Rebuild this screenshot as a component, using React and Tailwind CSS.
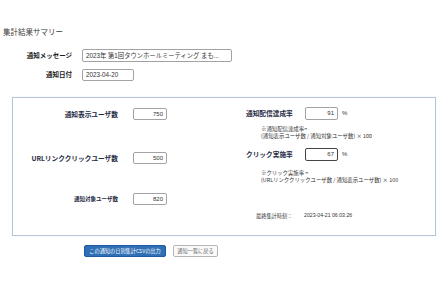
const jp = { fontFamily: '"Noto Sans CJK JP", "Noto Sans", sans-serif' };
const num = { fontFamily: '"Liberation Sans", "Noto Sans CJK JP", sans-serif' };

function NumBox({ value, w = "w-[34px]", h = "h-[12px]", dark = false }) {
  return (
    <div
      className={`${w} ${h} box-border rounded-[2px] border bg-white flex items-center justify-end pr-[3px] text-[6px] text-[#333] ${
        dark ? "border-[#444]" : "border-[#a3a3a3]"
      }`}
      style={num}
    >
      {value}
    </div>
  );
}

export default function App() {
  return (
    <div className="w-[440px] h-[284px] bg-white overflow-hidden" style={jp}>
      <div className="pt-[27px] pl-[3px] text-[7.5px] leading-[10px] text-[#3a3a3a]">
        集計結果サマリー
      </div>

      <div className="mt-[12px] flex flex-col gap-[7px]">
        <div className="flex items-center h-[13px]">
          <div className="w-[72px] text-right text-[6.5px] font-bold text-[#222]">
            通知メッセージ
          </div>
          <div
            className="ml-[10px] w-[150px] h-[13px] box-border border border-[#a3a3a3] rounded-[2px] flex items-center pl-[3px] text-[6.3px] text-[#333] whitespace-nowrap overflow-hidden"
            style={num}
          >
            2023年 第1回タウンホールミーティング まも...
          </div>
        </div>
        <div className="flex items-center h-[12px]">
          <div className="w-[72px] text-right text-[6.5px] font-bold text-[#222]">
            通知日付
          </div>
          <div
            className="ml-[10px] w-[52px] h-[12px] box-border border border-[#a3a3a3] rounded-[2px] flex items-center pl-[3px] text-[6.3px] text-[#333]"
            style={num}
          >
            2023-04-20
          </div>
        </div>
      </div>

      <div className="mt-[16px] ml-[12px] w-[424px] h-[139px] box-border border border-[#b4c5db] shadow-[0_0_1px_#d5dfeb] flex">
        {/* left column */}
        <div className="w-[154px] pt-[10px] flex flex-col">
          <div className="flex items-center h-[12px]">
            <div className="w-[105px] text-right text-[6.7px] font-bold text-[#1f2b45]">
              通知表示ユーザ数
            </div>
            <div className="ml-[15px]">
              <NumBox value="750" />
            </div>
          </div>
          <div className="flex items-center h-[12px] mt-[32px]">
            <div className="w-[105px] text-right text-[6.7px] font-bold text-[#1f2b45] whitespace-nowrap">
              URLリンククリックユーザ数
            </div>
            <div className="ml-[15px]">
              <NumBox value="500" />
            </div>
          </div>
          <div className="flex items-center h-[12px] mt-[29px]">
            <div className="w-[105px] text-right text-[5.5px] font-bold text-[#1f2b45]">
              通知対象ユーザ数
            </div>
            <div className="ml-[15px]">
              <NumBox value="820" />
            </div>
          </div>
        </div>

        {/* right column */}
        <div className="ml-[79px] pt-[9px] flex flex-col">
          <div className="flex items-center h-[13px]">
            <div className="w-[59px] text-[6.7px] font-bold text-[#1f2b45] whitespace-nowrap">
              通知配信達成率
            </div>
            <NumBox value="91" w="w-[33px]" h="h-[13px]" />
            <span className="ml-[4px] text-[6px] text-[#333]" style={num}>%</span>
          </div>
          <div className="mt-[6px] ml-[15px] text-[5.4px] leading-[7px] text-[#333] whitespace-nowrap">
            <div>※通知配信達成率=</div>
            <div>(通知表示ユーザ数 / 通知対象ユーザ数) × 100</div>
          </div>
          <div className="flex items-center h-[13px] mt-[8px]">
            <div className="w-[59px] text-[6.7px] font-bold text-[#1f2b45] whitespace-nowrap">
              クリック実施率
            </div>
            <NumBox value="67" w="w-[33px]" h="h-[13px]" dark />
            <span className="ml-[4px] text-[6px] text-[#333]" style={num}>%</span>
          </div>
          <div className="mt-[9px] ml-[15px] text-[5.4px] leading-[7px] text-[#333] whitespace-nowrap">
            <div>※クリック実施率 =</div>
            <div>(URLリンククリックユーザ数 / 通知表示ユーザ数) × 100</div>
          </div>
          <div className="mt-[28px] ml-[10px] flex items-center h-[8px] text-[5.2px] text-[#333] whitespace-nowrap">
            <span className="w-[48px]">最終集計時刻：</span>
            <span style={num}>2023-04-21 06:03:26</span>
          </div>
        </div>
      </div>

      <div className="mt-[9px] ml-[84px] flex gap-[7px]">
        <div className="w-[82px] h-[12px] box-border rounded-[2px] border border-[#1f5a9e] bg-[#2f6fb5] text-white text-[5.2px] flex items-center justify-center whitespace-nowrap">
          この通知の日別集計CSVの出力
        </div>
        <div className="w-[45px] h-[12px] box-border rounded-[2px] border border-[#b5b5b5] bg-[#fafafa] text-[#666] text-[5.2px] flex items-center justify-center whitespace-nowrap">
          通知一覧に戻る
        </div>
      </div>
    </div>
  );
}
